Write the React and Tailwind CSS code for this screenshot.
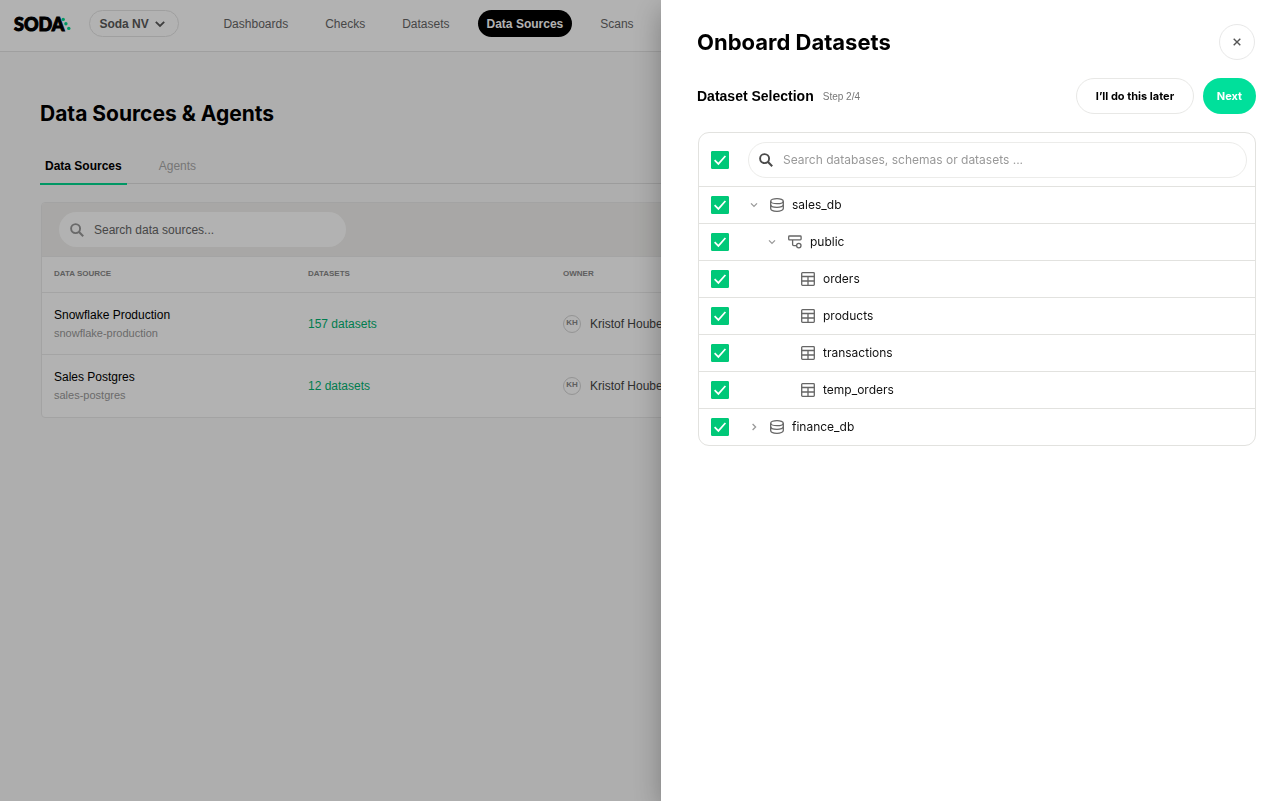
import React from "react";

const navItems = ["Dashboards", "Checks", "Datasets", "Data Sources", "Scans"];

const sources = [
  { name: "Snowflake Production", id: "snowflake-production", count: "157 datasets" },
  { name: "Sales Postgres", id: "sales-postgres", count: "12 datasets" },
];

const tree = [
  { name: "sales_db", kind: "database", open: true },
  { name: "public", kind: "schema", open: true },
  { name: "orders", kind: "table" },
  { name: "products", kind: "table" },
  { name: "transactions", kind: "table" },
  { name: "temp_orders", kind: "table" },
  { name: "finance_db", kind: "database", open: false },
];

const indents = { database: "pl-5", schema: "pl-[38px]", table: "pl-[72px]" };

function SearchIcon({ className }) {
  return (
    <svg viewBox="0 0 14 14" className={className} fill="none" stroke="currentColor" aria-hidden="true">
      <circle cx="5.6" cy="5.6" r="4.5" strokeWidth="1.9" />
      <path d="M8.8 8.8l4.4 4.4" strokeWidth="2.1" />
    </svg>
  );
}

function Chevron({ open }) {
  return (
    <svg viewBox="0 0 10 10" className="size-[10px]" fill="none" stroke="currentColor" strokeWidth="1.3" aria-hidden="true">
      <path d={open ? "M2 3.4l3 3 3-3" : "M3.6 2l3 3-3 3"} />
    </svg>
  );
}

function KindIcon({ kind }) {
  if (kind === "database") {
    return (
      <svg viewBox="0 0 14 14" className="size-[14px]" fill="none" stroke="currentColor" strokeWidth="1.3" aria-hidden="true">
        <ellipse cx="7" cy="3.2" rx="6.3" ry="2.5" />
        <path d="M.7 3.2v7.4c0 1.5 2.8 2.7 6.3 2.7s6.3-1.2 6.3-2.7V3.2" />
        <path d="M.7 6.8c0 1.5 2.8 2.6 6.3 2.6s6.3-1.1 6.3-2.6" />
      </svg>
    );
  }
  if (kind === "schema") {
    return (
      <svg viewBox="0 0 14 14" className="size-[14px]" fill="none" stroke="currentColor" strokeWidth="1.3" aria-hidden="true">
        <rect x=".7" y="1" width="12.4" height="3.9" rx=".8" />
        <path d="M4.6 4.9v4.6c0 .7.4 1.1 1.1 1.1h2.8" />
        <circle cx="10.8" cy="10.6" r="2.2" />
      </svg>
    );
  }
  return (
    <svg viewBox="0 0 14 14" className="size-[14px]" fill="none" stroke="currentColor" strokeWidth="1.3" aria-hidden="true">
      <rect x=".7" y=".7" width="12.6" height="12.6" rx=".8" />
      <path d="M.7 4.5h12.6M.7 9h12.6M7 4.5v8.8" />
    </svg>
  );
}

function Tick({ label }) {
  return (
    <span className="grid size-[18px] shrink-0">
      <input
        type="checkbox"
        defaultChecked
        aria-label={label}
        className="peer col-start-1 row-start-1 size-[18px] appearance-none rounded-[1px] border border-gray-300 checked:border-[#00c878] checked:bg-[#00c878]"
      />
      <svg
        viewBox="0 0 18 18"
        className="pointer-events-none col-start-1 row-start-1 hidden size-[18px] text-white peer-checked:block"
        fill="none"
        stroke="currentColor"
        strokeWidth="1.7"
        aria-hidden="true"
      >
        <path d="M3.6 9.2l3.8 3.7 7-7.9" />
      </svg>
    </span>
  );
}

function Header() {
  return (
    <header className="flex h-[52px] items-center border-b border-[#e4e4e4] bg-white pb-1 pl-[14px]">
      <a href="#home" className="flex items-center" aria-label="Soda">
        <span className="font-[Lato,sans-serif] text-lg leading-5 font-black text-black [-webkit-text-stroke:1px_black]">SODA</span>
        <svg viewBox="0 0 10 14" className="-ml-[3px] h-[14px] w-[10px] text-[#00d990]" fill="currentColor" aria-hidden="true">
          <circle cx="2.2" cy="2.4" r="1.7" />
          <circle cx="4.9" cy="6.7" r="1.7" />
          <circle cx="7.8" cy="11.4" r="1.7" />
        </svg>
      </a>
      <button type="button" className="ml-[18px] flex h-[27px] w-[90px] items-center justify-between rounded-full border border-[#e4e4e4] pr-3 pl-[9px] text-xs font-bold text-[#5a5a5a]">
        Soda NV
        <svg viewBox="0 0 12 12" className="size-3" fill="none" stroke="currentColor" strokeWidth="1.8" aria-hidden="true">
          <path d="M1.8 3.8L6 8l4.2-4.2" />
        </svg>
      </button>
      <nav className="ml-[35px] flex items-center gap-[19px] text-xs">
        {navItems.map((item) => (
          <a
            key={item}
            href={"#" + item.toLowerCase().replace(" ", "-")}
            className={
              item === "Data Sources"
                ? "flex h-[27px] items-center rounded-full bg-black px-[9px] font-bold whitespace-nowrap text-white"
                : "flex h-[27px] items-center px-[9px] text-[#666]"
            }
          >
            {item}
          </a>
        ))}
      </nav>
    </header>
  );
}

function SourcesPage() {
  return (
    <main className="px-10 pt-12">
      <h1 className="font-[Inter,sans-serif] text-[21px] leading-7 font-bold text-black">Data Sources &amp; Agents</h1>
      <div className="mt-[21px] flex h-[35px] border-b border-[#e0e0e0] text-xs" role="tablist">
        <button type="button" role="tab" aria-selected="true" className="-mb-[2px] border-b-2 border-[#00d990] px-[5px] font-bold text-black">
          Data Sources
        </button>
        <button type="button" role="tab" aria-selected="false" className="ml-[27px] px-[5px] text-[#aaa]">
          Agents
        </button>
      </div>
      <section className="mt-[18px] ml-px overflow-hidden rounded-[4px] border border-[#eaeaea] bg-white">
        <div className="flex h-[53px] items-center bg-[#f1f0ee] pl-[17px]">
          <label className="flex h-[35px] w-[287px] items-center gap-[10px] rounded-full bg-white px-[11px]">
            <SearchIcon className="size-[14px] shrink-0 text-[#999]" />
            <input type="search" aria-label="Search data sources" placeholder="Search data sources..." className="min-w-0 flex-1 text-xs outline-none placeholder:text-[#666]" />
          </label>
        </div>
        <table className="w-full table-fixed text-left text-xs">
          <thead>
            <tr className="h-[36px] border-y border-[#ebebeb] text-[8px] text-[#888]">
              <th className="w-[254px] px-3 font-bold">DATA SOURCE</th>
              <th className="w-[255px] px-3 font-bold">DATASETS</th>
              <th className="px-3 font-bold">OWNER</th>
            </tr>
          </thead>
          <tbody>
            {sources.map((s) => (
              <tr key={s.id} className="h-[62px] border-b border-[#ebebeb] last:border-b-0">
                <td className="px-3">
                  <div className="leading-[18px] text-black">{s.name}</div>
                  <div className="text-[11px] leading-[18px] text-[#999]">{s.id}</div>
                </td>
                <td className="px-3">
                  <a href={"#" + s.id} className="text-[#00b371]">{s.count}</a>
                </td>
                <td className="px-3">
                  <div className="flex items-center gap-[9px] text-[#444]">
                    <span className="flex size-[18px] items-center justify-center rounded-full border border-[#d4d4d4] text-[8px] font-bold text-[#888]">KH</span>
                    Kristof Houben
                  </div>
                </td>
              </tr>
            ))}
          </tbody>
        </table>
      </section>
    </main>
  );
}

function OnboardPanel() {
  return (
    <aside
      role="dialog"
      aria-labelledby="panel-title"
      className="fixed inset-y-0 right-0 w-[626px] max-w-full overflow-y-auto bg-white pt-6 pr-[31px] pl-9 font-[Inter,sans-serif] shadow-[0_9px_28px_rgba(0,0,0,0.3)]"
    >
      <div className="flex items-center justify-between pr-px">
        <h2 id="panel-title" className="text-[22px] leading-7 font-bold text-black">Onboard Datasets</h2>
        <button type="button" aria-label="Close" className="flex size-9 items-center justify-center rounded-full border border-[#e8e8e8] text-[#555]">
          <svg viewBox="0 0 8 8" className="size-2" fill="none" stroke="currentColor" strokeWidth="1.4" aria-hidden="true">
            <path d="M.7.7l6.6 6.6M7.3.7L.7 7.3" />
          </svg>
        </button>
      </div>
      <div className="mt-[18px] flex h-9 items-center">
        <h3 className="font-['Liberation_Sans',sans-serif] text-sm font-bold text-black">Dataset Selection</h3>
        <span className="ml-[9px] font-['Liberation_Sans',sans-serif] text-[10px] text-[#777]">Step 2/4</span>
        <div className="ml-auto flex gap-[9px] text-[11px] font-bold">
          <button type="button" className="h-9 w-[118px] rounded-full border border-[#e8e8e6] text-black">I’ll do this later</button>
          <button type="button" className="h-9 w-[53px] rounded-full bg-[#00e09b] text-white">Next</button>
        </div>
      </div>
      <div className="mt-[18px] ml-px rounded-[11px] border border-[#e2e2df]">
        <div className="flex h-[53px] items-center pr-2 pl-3">
          <Tick label="Select everything" />
          <label className="ml-[19px] flex h-9 flex-1 items-center gap-[10px] rounded-full border border-[#ececea] px-[10px]">
            <SearchIcon className="size-[14px] shrink-0 text-[#4a4a4a]" />
            <input
              type="search"
              aria-label="Search databases, schemas or datasets"
              placeholder="Search databases, schemas or datasets ..."
              className="min-w-0 flex-1 text-xs outline-none placeholder:text-[#999]"
            />
          </label>
        </div>
        <ul>
          {tree.map((node) => (
            <li key={node.name} className="flex h-[37px] items-center border-t border-[#e2e2df] pl-3 text-xs text-[#111]">
              <Tick label={"Select " + node.name} />
              <div className={"flex items-center " + indents[node.kind]}>
                {node.kind !== "table" && (
                  <button type="button" aria-label={"Toggle " + node.name} aria-expanded={node.open} className="mr-[11px] text-[#999]">
                    <Chevron open={node.open} />
                  </button>
                )}
                <span className="mr-2 text-[#666]">
                  <KindIcon kind={node.kind} />
                </span>
                {node.name}
              </div>
            </li>
          ))}
        </ul>
      </div>
    </aside>
  );
}

export default function App() {
  return (
    <div className="min-h-screen bg-[#fafafa] font-['Liberation_Sans',sans-serif]">
      <Header />
      <SourcesPage />
      <div className="fixed inset-0 bg-black/30" aria-hidden="true" />
      <OnboardPanel />
    </div>
  );
}
